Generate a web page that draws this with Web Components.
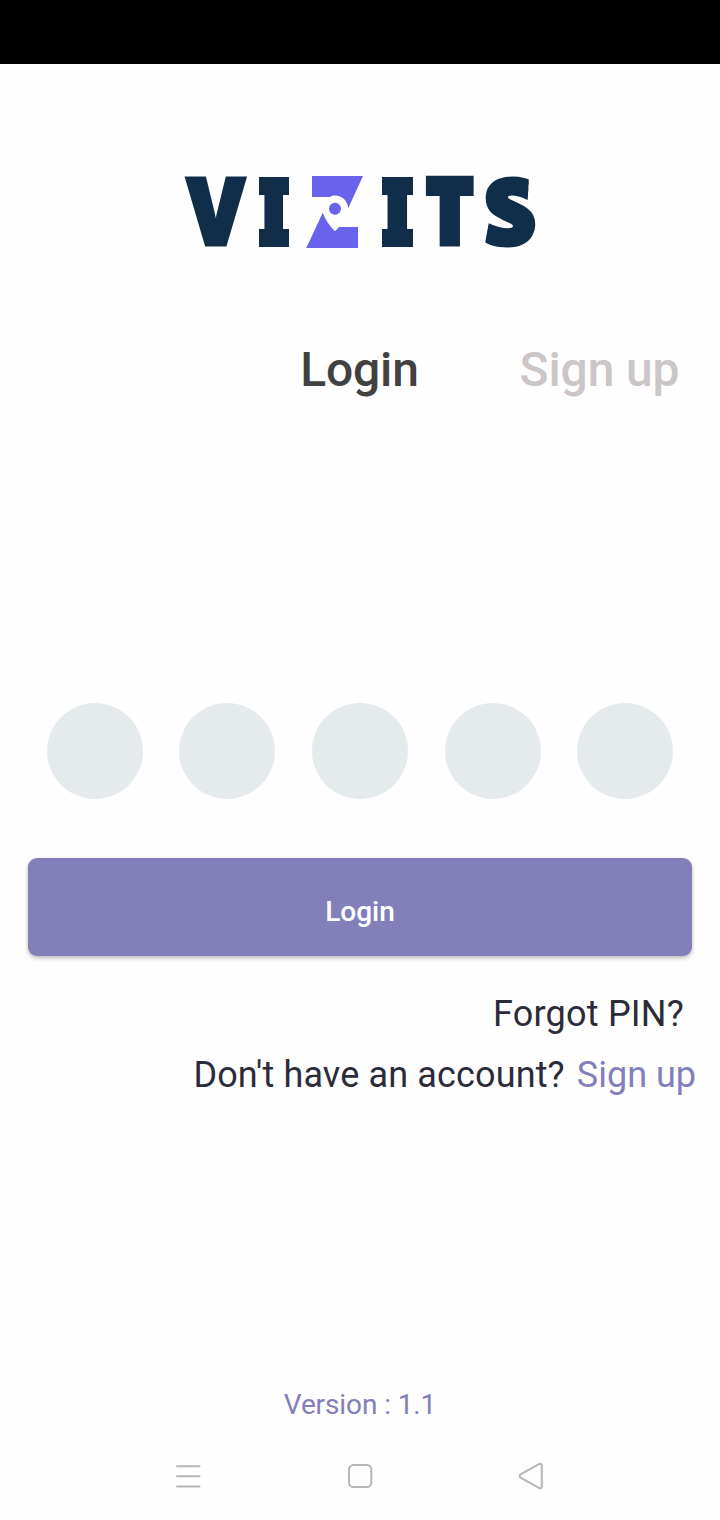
<!DOCTYPE html>
<html lang="en">
<head>
<meta charset="utf-8">
<title>Vizits</title>
<style>
    html, body { margin: 0; }
    body {
        background: #fefefe;
        font-family: Roboto, "Liberation Sans", sans-serif;
    }
</style>
</head>
<body>
<login-screen></login-screen>

<script>
// BRAND WORDMARK WITH THE MAP PIN EMBLEM IN THE MIDDLE
class BrandLogo extends HTMLElement {
    constructor() {
        super();
        this.attachShadow({ mode: 'open' });
        this.shadowRoot.innerHTML = `
            <style>
                :host { display: block; width: 360px; height: 164px; }
                svg { display: block; overflow: visible; }
                text {
                    font-family: "Open Sans", "Liberation Sans", sans-serif;
                    font-weight: 800;
                    font-size: 96px;
                    fill: #102d49;
                    stroke: #102d49;
                    stroke-width: 0;
                    stroke-linejoin: miter;
                    vector-effect: non-scaling-stroke;
                }
                .slab { fill: #102d49; }
                .pin { fill: #6962ed; }
            </style>
            <svg width="360" height="164" viewBox="180 130 360 164" role="img" aria-label="VIZITS">
                <!-- TRIMS THE ENDS OF THE LAST LETTER -->
                <clipPath id="trim"><path d="M480 170H529.3L527.6 201H540V252H480V243H485L489 222L480 219Z"/></clipPath>
                <text id="v">V</text>
                <text id="i1">I</text>
                <rect class="slab" x="259" y="177" width="30" height="18"/>
                <rect class="slab" x="259" y="229" width="30" height="18"/>
                <g class="pin">
                    <path d="M312 176H363L348.2 208.3C347.8 201 342 195.6 335 195.6C333 195.6 331.5 196 330 197H312Z"/>
                    <path d="M322.7 212.7C325 219 329.5 226 335 231.3L339 227H358V248H306.3Z"/>
                    <circle cx="335" cy="208.8" r="6"/>
                </g>
                <text id="i2">I</text>
                <rect class="slab" x="382" y="177" width="31" height="18"/>
                <rect class="slab" x="382" y="229" width="31" height="18"/>
                <text id="t">T</text>
                <g clip-path="url(#trim)"><text id="s">S</text></g>
            </svg>
        `;
    }

    connectedCallback() {
        // INK BOX OF EACH LETTER: LEFT, TOP, RIGHT, BOTTOM, EXTRA WEIGHT
        this.fitLetter('v', 185, 176, 247, 246, 3);
        this.fitLetter('i1', 264, 177, 284, 247, 0);
        this.fitLetter('i2', 387, 177, 408, 247, 0);
        this.fitLetter('t', 425.5, 176, 474.5, 247, 5.5);
        this.fitLetter('s', 485, 176, 536, 247.5, 5);
    }

    // STRETCH A LETTER SO THAT ITS INK, STROKE INCLUDED, FILLS THE GIVEN BOX
    fitLetter(id, left, top, right, bottom, weight) {
        const letter = this.shadowRoot.getElementById(id);
        const context = document.createElement('canvas').getContext('2d');
        context.font = '800 96px "Open Sans", "Liberation Sans", sans-serif';
        const ink = context.measureText(letter.textContent);
        const scaleX = (right - left - weight) / (ink.actualBoundingBoxRight + ink.actualBoundingBoxLeft);
        const scaleY = (bottom - top - weight) / (ink.actualBoundingBoxAscent + ink.actualBoundingBoxDescent);
        const x = left + weight / 2 + ink.actualBoundingBoxLeft * scaleX;
        const y = top + weight / 2 + ink.actualBoundingBoxAscent * scaleY;
        letter.style.strokeWidth = weight;
        letter.setAttribute('transform', `translate(${x} ${y}) scale(${scaleX} ${scaleY})`);
    }
}

// LOGIN / SIGN UP SWITCH, THE FIRST COLUMN STAYS EMPTY
class AuthTabs extends HTMLElement {
    constructor() {
        super();
        this.attachShadow({ mode: 'open' });
        this.shadowRoot.innerHTML = `
            <style>
                :host {
                    display: grid;
                    grid-template-columns: repeat(3, 1fr);
                    font-size: 48px;
                    font-weight: 500;
                    line-height: 56px;
                    letter-spacing: -.15px;
                    text-align: center;
                    color: #cbc5c6;
                }
                ::slotted(*) { margin-left: -1px; white-space: nowrap; }
                ::slotted([active]) { color: #414141; }
            </style>
            <span></span>
            <slot></slot>
        `;
    }
}

// ROW OF ROUND PIN FIELDS
class PinInput extends HTMLElement {
    constructor() {
        super();
        this.attachShadow({ mode: 'open' });
        this.shadowRoot.innerHTML = `
            <style>
                :host { display: flex; justify-content: space-between; padding: 0 46.8px; }
                i { width: 96px; height: 96px; border-radius: 50%; background: #e5ebed; }
            </style>
        ` + '<i></i>'.repeat(Number(this.getAttribute('length')) || 5);
    }
}

class PrimaryButton extends HTMLElement {
    constructor() {
        super();
        this.attachShadow({ mode: 'open' });
        this.shadowRoot.innerHTML = `
            <style>
                :host { display: block; }
                button {
                    display: block;
                    box-sizing: border-box;
                    width: 100%;
                    height: 98px;
                    padding: 9px 0 0;
                    border: 0;
                    border-radius: 9px;
                    background: #827fbb;
                    box-shadow: 0 2px 4px rgba(0, 0, 0, .28);
                    color: #fff;
                    font: 500 28px/33px Roboto, "Liberation Sans", sans-serif;
                }
            </style>
            <button type="button"><slot></slot></button>
        `;
    }
}

// SYSTEM NAVIGATION BAR: RECENTS, HOME, BACK
class NavigationBar extends HTMLElement {
    constructor() {
        super();
        this.attachShadow({ mode: 'open' });
        this.shadowRoot.innerHTML = `
            <style>
                :host {
                    display: flex;
                    justify-content: space-between;
                    align-items: center;
                    height: 88px;
                    padding: 0 174px;
                }
                svg { fill: none; stroke: #b6b6b6; stroke-width: 2; stroke-linecap: round; stroke-linejoin: round; }
            </style>
            <svg width="28" height="28" viewBox="0 0 28 28"><path d="M3 4.3H25.5M3 14.3H25.5M3 24.4H25.5"/></svg>
            <svg width="28" height="28" viewBox="0 0 28 28"><rect x="3" y="3" width="22.3" height="22" rx="4.5"/></svg>
            <svg width="28" height="28" viewBox="0 0 28 28"><path d="M20.9 2.2L2.9 12.2Q.2 14 2.9 15.8L20.9 25.8Q23.8 27 23.8 24V4Q23.8 1 20.9 2.2Z"/></svg>
        `;
    }
}

class LoginScreen extends HTMLElement {
    constructor() {
        super();
        this.attachShadow({ mode: 'open' });
        this.shadowRoot.innerHTML = `
            <style>
                :host { display: flex; flex-direction: column; height: 1520px; }
                header { height: 64px; background: #000; }
                brand-logo { margin: 66px auto 0; }
                auth-tabs { margin-top: 48px; }
                pin-input { margin-top: 305px; }
                primary-button { margin: 59px 28px 0; }
                p { margin: 0; color: #2c2b3a; font-size: 36px; line-height: 42px; white-space: nowrap; }
                .forgot { margin-top: 37px; padding-right: 36px; letter-spacing: .22px; text-align: right; }
                .register { display: flex; justify-content: flex-end; gap: 12px; margin-top: 19px; padding-right: 24px; }
                .question { letter-spacing: .14px; }
                .link { color: #827fbb; }
                footer {
                    margin-top: auto;
                    padding-bottom: 11px;
                    color: #827fbb;
                    font-size: 28px;
                    line-height: 33px;
                    letter-spacing: -.1px;
                    text-align: center;
                }
            </style>
            <header></header>
            <brand-logo></brand-logo>
            <auth-tabs><span active>Login</span><span>Sign up</span></auth-tabs>
            <pin-input length="5"></pin-input>
            <primary-button>Login</primary-button>
            <p class="forgot">Forgot PIN?</p>
            <p class="register"><span class="question">Don't have an account?</span><span class="link">Sign up</span></p>
            <footer>Version : 1.1</footer>
            <navigation-bar></navigation-bar>
        `;
    }
}

// REGISTER CUSTOM ELEMENTS
customElements.define('brand-logo', BrandLogo);
customElements.define('auth-tabs', AuthTabs);
customElements.define('pin-input', PinInput);
customElements.define('primary-button', PrimaryButton);
customElements.define('navigation-bar', NavigationBar);
customElements.define('login-screen', LoginScreen);
</script>
</body>
</html>
